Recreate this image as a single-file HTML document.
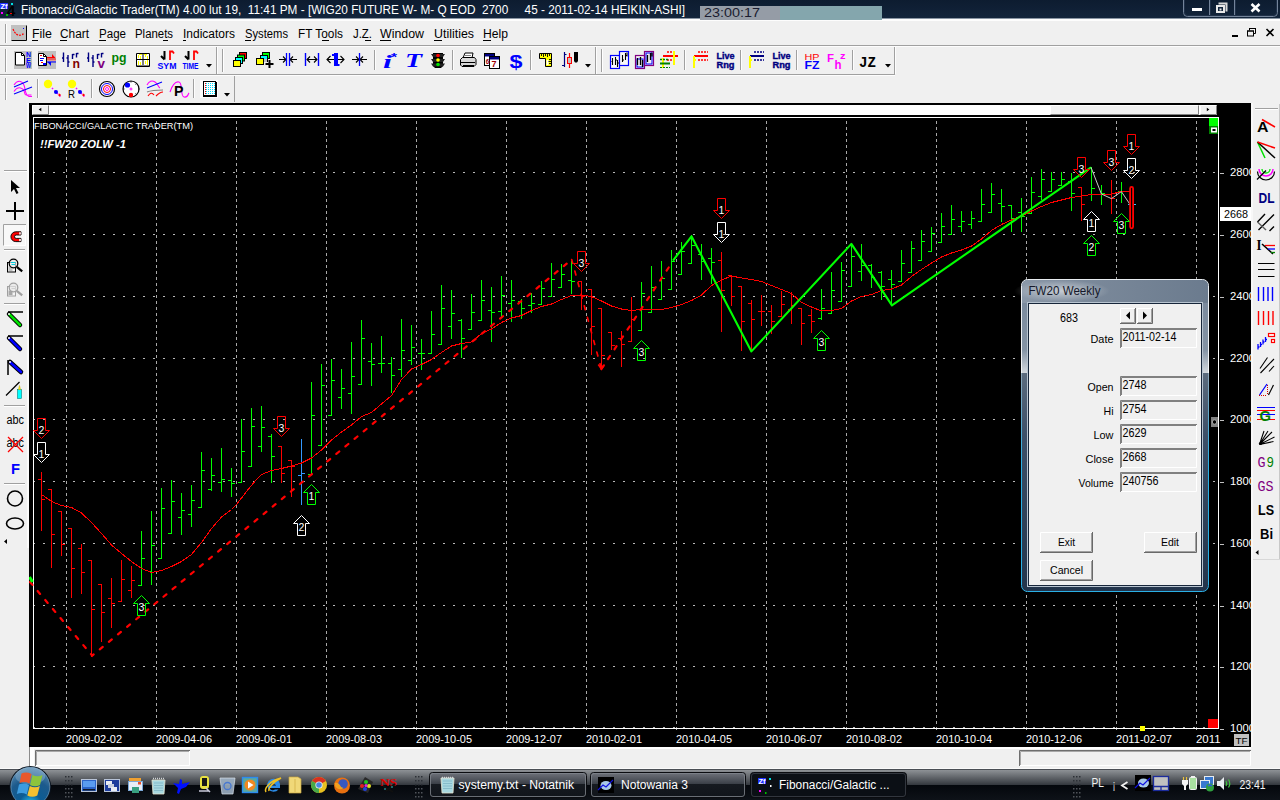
<!DOCTYPE html>
<html lang="pl"><head><meta charset="utf-8"><title>Fibonacci/Galactic Trader(TM) 4.00</title>
<style>html,body{margin:0;padding:0;background:#f0f0f0;overflow:hidden}svg{display:block;font-family:"Liberation Sans", sans-serif}text{white-space:pre}</style></head><body>
<svg width="1280" height="800" viewBox="0 0 1280 800">
<rect x="0" y="0" width="1280" height="800" fill="#f0f0f0" />
<rect x="29" y="103" width="1222" height="644" fill="#000" />
<rect x="32" y="105" width="1185" height="10" fill="#fff" />
<rect x="32" y="105" width="17" height="10" fill="#f0f0f0" />
<path d="M32.5 114.5V105.5H48.5" stroke="#fff" fill="none"/><path d="M32.5 114.5H48.5V105.5" stroke="#808080" fill="none"/>
<path d="M41.3 107.7l-2.6 1.8l2.6 1.800z" fill="#000"/>
<rect x="1050" y="105" width="149" height="10" fill="#f0f0f0" />
<path d="M1050.5 114.5V105.5H1198.5" stroke="#fff" fill="none"/><path d="M1050.5 114.5H1198.5V105.5" stroke="#808080" fill="none"/>
<rect x="1200" y="105" width="17" height="10" fill="#f0f0f0" />
<path d="M1200.5 114.5V105.5H1216.5" stroke="#fff" fill="none"/><path d="M1200.5 114.5H1216.5V105.5" stroke="#808080" fill="none"/>
<path d="M1206.800 107.700l2.600 1.800l-2.600 1.800z" fill="#000"/>
<g shape-rendering="crispEdges">
<line x1="33" y1="172.5" x2="1218" y2="172.5" stroke="#b8b8b8" stroke-width="1" stroke-dasharray="2 8"/>
<line x1="33" y1="234.5" x2="1218" y2="234.5" stroke="#b8b8b8" stroke-width="1" stroke-dasharray="2 8"/>
<line x1="33" y1="296.5" x2="1218" y2="296.5" stroke="#b8b8b8" stroke-width="1" stroke-dasharray="2 8"/>
<line x1="33" y1="358.5" x2="1218" y2="358.5" stroke="#b8b8b8" stroke-width="1" stroke-dasharray="2 8"/>
<line x1="33" y1="419.5" x2="1218" y2="419.5" stroke="#b8b8b8" stroke-width="1" stroke-dasharray="2 8"/>
<line x1="33" y1="481.5" x2="1218" y2="481.5" stroke="#b8b8b8" stroke-width="1" stroke-dasharray="2 8"/>
<line x1="33" y1="543.5" x2="1218" y2="543.5" stroke="#b8b8b8" stroke-width="1" stroke-dasharray="2 8"/>
<line x1="33" y1="605.5" x2="1218" y2="605.5" stroke="#b8b8b8" stroke-width="1" stroke-dasharray="2 8"/>
<line x1="33" y1="666.5" x2="1218" y2="666.5" stroke="#b8b8b8" stroke-width="1" stroke-dasharray="2 8"/>
<line x1="33" y1="727.5" x2="1218" y2="727.5" stroke="#b8b8b8" stroke-width="1" stroke-dasharray="2 8"/>
<line x1="66.5" y1="121" x2="66.5" y2="733" stroke="#a8a8a8" stroke-width="1" stroke-dasharray="3 3"/>
<line x1="156.5" y1="121" x2="156.5" y2="733" stroke="#a8a8a8" stroke-width="1" stroke-dasharray="3 3"/>
<line x1="236.5" y1="121" x2="236.5" y2="733" stroke="#a8a8a8" stroke-width="1" stroke-dasharray="3 3"/>
<line x1="326.5" y1="121" x2="326.5" y2="733" stroke="#a8a8a8" stroke-width="1" stroke-dasharray="3 3"/>
<line x1="416.5" y1="121" x2="416.5" y2="733" stroke="#a8a8a8" stroke-width="1" stroke-dasharray="3 3"/>
<line x1="506.5" y1="121" x2="506.5" y2="733" stroke="#a8a8a8" stroke-width="1" stroke-dasharray="3 3"/>
<line x1="586.5" y1="121" x2="586.5" y2="733" stroke="#a8a8a8" stroke-width="1" stroke-dasharray="3 3"/>
<line x1="676.5" y1="121" x2="676.5" y2="733" stroke="#a8a8a8" stroke-width="1" stroke-dasharray="3 3"/>
<line x1="766.5" y1="121" x2="766.5" y2="733" stroke="#a8a8a8" stroke-width="1" stroke-dasharray="3 3"/>
<line x1="846.5" y1="121" x2="846.5" y2="733" stroke="#a8a8a8" stroke-width="1" stroke-dasharray="3 3"/>
<line x1="936.5" y1="121" x2="936.5" y2="733" stroke="#a8a8a8" stroke-width="1" stroke-dasharray="3 3"/>
<line x1="1026.5" y1="121" x2="1026.5" y2="733" stroke="#a8a8a8" stroke-width="1" stroke-dasharray="3 3"/>
<line x1="1116.5" y1="121" x2="1116.5" y2="733" stroke="#a8a8a8" stroke-width="1" stroke-dasharray="3 3"/>
<line x1="1196.5" y1="121" x2="1196.5" y2="733" stroke="#a8a8a8" stroke-width="1" stroke-dasharray="3 3"/>
<path d="M33.5 728.5V117.5H1218.5V728.5Z" stroke="#fff" fill="none"/>
<line x1="1220" y1="173.5" x2="1224" y2="173.5" stroke="#c0c0c0" stroke-width="1" />
<line x1="1220" y1="235.5" x2="1224" y2="235.5" stroke="#c0c0c0" stroke-width="1" />
<line x1="1220" y1="297.5" x2="1224" y2="297.5" stroke="#c0c0c0" stroke-width="1" />
<line x1="1220" y1="359.5" x2="1224" y2="359.5" stroke="#c0c0c0" stroke-width="1" />
<line x1="1220" y1="420.5" x2="1224" y2="420.5" stroke="#c0c0c0" stroke-width="1" />
<line x1="1220" y1="482.5" x2="1224" y2="482.5" stroke="#c0c0c0" stroke-width="1" />
<line x1="1220" y1="544.5" x2="1224" y2="544.5" stroke="#c0c0c0" stroke-width="1" />
<line x1="1220" y1="606.5" x2="1224" y2="606.5" stroke="#c0c0c0" stroke-width="1" />
<line x1="1220" y1="667.5" x2="1224" y2="667.5" stroke="#c0c0c0" stroke-width="1" />
<line x1="1220" y1="729.5" x2="1224" y2="729.5" stroke="#c0c0c0" stroke-width="1" />
</g>
<rect x="1209" y="118" width="9" height="8" fill="#00ff00" />
<rect x="1209" y="126" width="9" height="8" fill="#008000" />
<rect x="1211" y="127.5" width="6" height="5" fill="#fff" />
<rect x="1212.5" y="129" width="3" height="2" fill="#000" />
<rect x="1208" y="719" width="10" height="9" fill="#ff0000" />
<rect x="1140" y="726" width="5" height="5" fill="#ffff00" />
<rect x="1211" y="417" width="7" height="10" fill="#808080" />
<circle cx="1214.5" cy="422" r="2.2" fill="#000" stroke="#c0c0c0" stroke-width="0.8"/>
<g shape-rendering="crispEdges" stroke-width="1" fill="none">
<path d="M41.5 472V531M38 479.5H42M41 499.5H45M51.5 489V568M48 489.5H52M51 534.5H55M61.5 511V556M58 511.5H62M61 544.5H65M71.5 528V598M68 528.5H72M71 568.5H75M81.5 544V594M78 548.5H82M81 572.5H85M91.5 560V657M88 560.5H92M91 609.5H95M101.5 584V642M98 584.5H102M101 612.5H105M111.5 578V628M108 598.5H112M111 603.5H115M121.5 560V602M118 601.5H122M121 579.5H125M131.5 566V598M128 590.5H132M131 580.5H135M281.5 446V483M278 446.5H282M281 473.5H285M291.5 460V497M288 460.5H292M291 466.5H295M581.5 281V310M578 281.5H582M581 296.5H585M591.5 289V355M588 289.5H592M591 326.5H595M601.5 308V369M598 308.5H602M601 355.5H605M611.5 332V350M608 332.5H612M611 345.5H615M621.5 331V367M618 338.5H622M621 344.5H625M631.5 297V342M628 341.5H632M631 319.5H635M721.5 252V332M718 260.5H722M721 290.5H725M731.5 275V306M728 275.5H732M731 296.5H735M741.5 286V351M738 286.5H742M741 321.5H745M751.5 300V351M748 303.5H752M751 319.5H755M761.5 295V326M758 311.5H762M761 311.5H765M771.5 305V334M768 311.5H772M771 321.5H775M781.5 291V316M778 316.5H782M781 304.5H785M791.5 292V324M788 309.5H792M791 305.5H795M801.5 308V345M798 308.5H802M801 323.5H805M811.5 309V333M808 315.5H812M811 321.5H815M1081.5 187V221M1078 187.5H1082M1081 204.5H1085M1111.5 180V214M1108 194.5H1112M1111 198.5H1115" stroke="#ff0000"/>
<path d="M141.5 531V585M138 585.5H142M141 558.5H145M151.5 511V585M148 571.5H152M151 545.5H155M161.5 488V558M158 558.5H162M161 508.5H165M171.5 480V533M168 533.5H172M171 501.5H175M181.5 493V535M178 517.5H182M181 510.5H185M191.5 485V527M188 514.5H192M191 500.5H195M201.5 452V507M198 507.5H202M201 470.5H205M211.5 458V491M208 489.5H212M211 475.5H215M221.5 448V492M218 482.5H222M221 479.5H225M231.5 468V497M228 480.5H232M231 483.5H235M241.5 419V482M238 482.5H242M241 451.5H245M251.5 408V466M248 466.5H252M251 426.5H255M261.5 406V452M258 446.5H262M261 427.5H265M271.5 434V483M268 436.5H272M271 456.5H275M311.5 382V474M308 474.5H312M311 415.5H315M321.5 364V445M318 445.5H322M321 385.5H325M331.5 359V415M328 415.5H332M331 380.5H335M341.5 369V409M338 397.5H342M341 388.5H345M351.5 342V414M348 393.5H352M351 376.5H355M361.5 320V384M358 384.5H362M361 338.5H365M371.5 343V386M368 361.5H372M371 364.5H375M381.5 336V373M378 363.5H382M381 363.5H385M391.5 357V393M388 363.5H392M391 375.5H395M401.5 319V377M398 369.5H402M401 350.5H405M411.5 325V365M408 360.5H412M411 347.5H415M421.5 339V370M418 353.5H422M421 353.5H425M431.5 311V353M428 353.5H432M431 334.5H435M441.5 285V344M438 344.5H442M441 308.5H445M451.5 290V339M448 326.5H452M451 313.5H455M461.5 319V358M458 320.5H462M461 338.5H465M471.5 294V330M468 329.5H472M471 312.5H475M481.5 280V321M478 320.5H482M481 300.5H485M491.5 287V342M488 310.5H492M491 312.5H495M501.5 276V317M498 311.5H502M501 295.5H505M511.5 280V322M508 303.5H512M511 300.5H515M521.5 299V319M518 301.5H522M521 308.5H525M531.5 293V313M528 305.5H532M531 303.5H535M541.5 281V305M538 304.5H542M541 288.5H545M551.5 263V296M548 296.5H552M551 279.5H555M561.5 264V287M558 287.5H562M561 274.5H565M571.5 261V294M568 280.5H572M571 281.5H575M641.5 282V330M638 330.5H642M641 293.5H645M651.5 266V312M648 312.5H652M651 287.5H655M661.5 261V299M658 299.5H662M661 278.5H665M671.5 250V289M668 289.5H672M671 261.5H675M681.5 242V274M678 274.5H682M681 251.5H685M691.5 235V263M688 263.5H692M691 245.5H695M701.5 244V280M698 254.5H702M701 261.5H705M711.5 248V284M708 258.5H712M711 262.5H715M821.5 289V320M818 318.5H822M821 308.5H825M831.5 272V314M828 313.5H832M831 290.5H835M841.5 262V301M838 301.5H842M841 270.5H845M851.5 243V287M848 286.5H852M851 256.5H855M861.5 244V281M858 271.5H862M861 265.5H865M871.5 264V288M868 265.5H872M871 277.5H875M881.5 271V300M878 272.5H882M881 286.5H885M891.5 270V304M888 279.5H892M891 284.5H895M901.5 250V281M898 281.5H902M901 263.5H905M911.5 241V272M908 272.5H912M911 248.5H915M921.5 230V260M918 260.5H922M921 241.5H925M931.5 227V251M928 251.5H932M931 233.5H935M941.5 213V243M938 242.5H942M941 226.5H945M951.5 205V234M948 234.5H952M951 219.5H955M961.5 211V232M958 226.5H962M961 221.5H965M971.5 211V229M968 224.5H972M971 218.5H975M981.5 189V222M978 221.5H982M981 204.5H985M991.5 183V213M988 212.5H992M991 194.5H995M1001.5 189V222M998 203.5H1002M1001 206.5H1005M1011.5 205V232M1008 205.5H1012M1011 218.5H1015M1021.5 198V232M1018 212.5H1022M1021 216.5H1025M1031.5 177V213M1028 213.5H1032M1031 192.5H1035M1041.5 169V200M1038 196.5H1042M1041 179.5H1045M1051.5 172V192M1048 191.5H1052M1051 179.5H1055M1061.5 172V186M1058 185.5H1062M1061 179.5H1065M1071.5 173V211M1068 181.5H1072M1071 193.5H1075M1091.5 167V201M1088 194.5H1092M1091 188.5H1095M1101.5 185V205M1098 194.5H1102M1101 193.5H1105M1121.5 182V203M1118 191.5H1122M1121 191.5H1125" stroke="#00ff00"/>
<path d="M301.5 439V505M298 475.5H302M301 473.5H305" stroke="#3399ff"/>
</g>
<polyline points="42.5,495 51.5,501.5 61.5,505.5 71.5,507.5 81.5,513 91.5,522.5 101.5,533.5 111.5,545 121.5,553.5 131.5,561.5 141.5,568.5 151.5,572.5 161.5,570.5 171.5,566.5 181.5,561.5 191.5,554.5 201.5,542.5 211.5,528.5 221.5,517 231.5,509.5 236.5,504.5 246.5,491.5 256,480 261.5,474.5 271.5,470.5 281.5,468.5 291.5,466 301.5,463 311.5,458 321.5,450 331.5,440 341.5,432 351.5,425 361.5,416.5 371.5,412.5 381.5,404 391.5,395.5 401.5,379.5 411.5,369 421.5,364.5 431.5,359.5 441.5,352.5 451.5,346 461.5,343.5 471.5,342 481.5,333.5 491.5,329 501.5,322.5 511.5,318 521.5,315.5 531.5,310.5 541.5,306.5 551.5,304 561.5,299.5 571.5,295.5 581.5,295 591.5,296.5 601.5,301 611.5,306 621.5,309 631.5,310.5 641.5,309.5 651.5,309.5 661.5,309.5 671.5,307.5 681.5,304.5 691.5,300.5 701.5,295 711.5,285.5 721.5,280 731.5,276 741.5,278 751.5,279.5 761.5,281.5 771.5,285.5 781.5,289.5 791.5,293.5 801.5,302.5 811.5,307 821.5,311 831.5,310.5 841.5,308.5 851.5,301 861.5,296.5 871.5,294.5 881.5,290.5 891.5,289 901.5,285 911.5,276.5 921.5,269.5 931.5,263 941.5,257 951.5,253 961.5,250 971.5,246 981.5,239 991.5,230.5 1001.5,224.5 1011.5,220 1021.5,216 1031.5,211 1041.5,206.5 1051.5,202.5 1061.5,200 1071.5,197.5 1081.5,196 1091.5,194.5 1101.5,194.5 1111.5,194 1121.5,191.5 1130,191.5" fill="none" stroke="#ff0000" stroke-width="1" shape-rendering="crispEdges"/>
<path d="M30 582L92.2 655.6L571.7 259.5" fill="none" stroke="#ff0000" stroke-width="2.2" stroke-dasharray="3.8 8" stroke-linecap="round"/>
<path d="M571.7 259.5L601.4 369" fill="none" stroke="#ff0000" stroke-width="1.7" stroke-dasharray="4 8" stroke-linecap="round"/>
<path d="M601.4 369L673 261" fill="none" stroke="#ff0000" stroke-width="2.2" stroke-dasharray="3.8 8" stroke-linecap="round"/>
<path d="M598.3 364.5L601.4 369L604.5 364.5" fill="none" stroke="#ff0000" stroke-width="1.6"/>
<path d="M673 260.6L691.5 236.3L751.4 351.4L851.4 243.9L891.9 305.3L1091 167.3" fill="none" stroke="#00ff00" stroke-width="2.1" stroke-linejoin="round"/>
<path d="M29.5 577L32.5 582" stroke="#00ff00" stroke-width="3"/>
<polyline points="1091,167.3 1101.4,194 1111.4,198.6 1121.4,191.6 1130,204.4" fill="none" stroke="#c8c8c8" stroke-width="1"/>
<line x1="1128" y1="204.5" x2="1136" y2="204.5" stroke="#40c0ff" stroke-width="1" />
<rect x="1130.1" y="186.9" width="3" height="41.4" rx="1.5" fill="#000" stroke="#ff0000" stroke-width="1.8"/>
<polygon points="37.5,418.5 45.5,418.5 45.5,430.5 49.5,430.5 41.5,438.5 33.5,430.5 37.5,430.5" fill="none" stroke="#ff0000" stroke-width="1"/>
<text x="41.5" y="433.7" font-size="10.5" fill="#fff" text-anchor="middle" xml:space="preserve">2</text>
<polygon points="37.5,442.5 45.5,442.5 45.5,454.5 49.5,454.5 41.5,462.5 33.5,454.5 37.5,454.5" fill="none" stroke="#fff" stroke-width="1"/>
<text x="41.5" y="457.7" font-size="10.5" fill="#fff" text-anchor="middle" xml:space="preserve">1</text>
<polygon points="141.5,595.5 149.5,603.5 145.5,603.5 145.5,615.5 137.5,615.5 137.5,603.5 133.5,603.5" fill="none" stroke="#00ff00" stroke-width="1"/>
<text x="141.5" y="610.7" font-size="10.5" fill="#fff" text-anchor="middle" xml:space="preserve">3</text>
<polygon points="277.5,416.5 285.5,416.5 285.5,428.5 289.5,428.5 281.5,436.5 273.5,428.5 277.5,428.5" fill="none" stroke="#ff0000" stroke-width="1"/>
<text x="281.5" y="431.7" font-size="10.5" fill="#fff" text-anchor="middle" xml:space="preserve">3</text>
<polygon points="311.5,484.5 319.5,492.5 315.5,492.5 315.5,504.5 307.5,504.5 307.5,492.5 303.5,492.5" fill="none" stroke="#00ff00" stroke-width="1"/>
<text x="311.5" y="499.7" font-size="10.5" fill="#fff" text-anchor="middle" xml:space="preserve">1</text>
<polygon points="301.5,515.5 309.5,523.5 305.5,523.5 305.5,535.5 297.5,535.5 297.5,523.5 293.5,523.5" fill="none" stroke="#fff" stroke-width="1"/>
<text x="301.5" y="530.7" font-size="10.5" fill="#fff" text-anchor="middle" xml:space="preserve">2</text>
<polygon points="577.5,251.5 585.5,251.5 585.5,263.5 589.5,263.5 581.5,271.5 573.5,263.5 577.5,263.5" fill="none" stroke="#ff0000" stroke-width="1"/>
<text x="581.5" y="266.7" font-size="10.5" fill="#fff" text-anchor="middle" xml:space="preserve">3</text>
<polygon points="641.5,340.5 649.5,348.5 645.5,348.5 645.5,360.5 637.5,360.5 637.5,348.5 633.5,348.5" fill="none" stroke="#00ff00" stroke-width="1"/>
<text x="641.5" y="355.7" font-size="10.5" fill="#fff" text-anchor="middle" xml:space="preserve">3</text>
<polygon points="717.5,198.5 725.5,198.5 725.5,210.5 729.5,210.5 721.5,218.5 713.5,210.5 717.5,210.5" fill="none" stroke="#ff0000" stroke-width="1"/>
<text x="721.5" y="213.7" font-size="10.5" fill="#fff" text-anchor="middle" xml:space="preserve">1</text>
<polygon points="717.5,222.5 725.5,222.5 725.5,234.5 729.5,234.5 721.5,242.5 713.5,234.5 717.5,234.5" fill="none" stroke="#fff" stroke-width="1"/>
<text x="721.5" y="237.7" font-size="10.5" fill="#fff" text-anchor="middle" xml:space="preserve">1</text>
<polygon points="821.5,330.5 829.5,338.5 825.5,338.5 825.5,350.5 817.5,350.5 817.5,338.5 813.5,338.5" fill="none" stroke="#00ff00" stroke-width="1"/>
<text x="821.5" y="345.7" font-size="10.5" fill="#fff" text-anchor="middle" xml:space="preserve">3</text>
<polygon points="1077.5,157.5 1085.5,157.5 1085.5,169.5 1089.5,169.5 1081.5,177.5 1073.5,169.5 1077.5,169.5" fill="none" stroke="#ff0000" stroke-width="1"/>
<text x="1081.5" y="172.7" font-size="10.5" fill="#fff" text-anchor="middle" xml:space="preserve">3</text>
<polygon points="1107.5,150.5 1115.5,150.5 1115.5,162.5 1119.5,162.5 1111.5,170.5 1103.5,162.5 1107.5,162.5" fill="none" stroke="#ff0000" stroke-width="1"/>
<text x="1111.5" y="165.7" font-size="10.5" fill="#fff" text-anchor="middle" xml:space="preserve">3</text>
<polygon points="1127.5,134.5 1135.5,134.5 1135.5,146.5 1139.5,146.5 1131.5,154.5 1123.5,146.5 1127.5,146.5" fill="none" stroke="#ff0000" stroke-width="1"/>
<text x="1131.5" y="149.7" font-size="10.5" fill="#fff" text-anchor="middle" xml:space="preserve">1</text>
<polygon points="1127.5,158.5 1135.5,158.5 1135.5,170.5 1139.5,170.5 1131.5,178.5 1123.5,170.5 1127.5,170.5" fill="none" stroke="#fff" stroke-width="1"/>
<text x="1131.5" y="173.7" font-size="10.5" fill="#fff" text-anchor="middle" xml:space="preserve">2</text>
<polygon points="1091.5,211.5 1099.5,219.5 1095.5,219.5 1095.5,231.5 1087.5,231.5 1087.5,219.5 1083.5,219.5" fill="none" stroke="#fff" stroke-width="1"/>
<text x="1091.5" y="226.7" font-size="10.5" fill="#fff" text-anchor="middle" xml:space="preserve">1</text>
<polygon points="1091.5,235.5 1099.5,243.5 1095.5,243.5 1095.5,255.5 1087.5,255.5 1087.5,243.5 1083.5,243.5" fill="none" stroke="#00ff00" stroke-width="1"/>
<text x="1091.5" y="250.7" font-size="10.5" fill="#fff" text-anchor="middle" xml:space="preserve">2</text>
<polygon points="1121.5,213.5 1129.5,221.5 1125.5,221.5 1125.5,233.5 1117.5,233.5 1117.5,221.5 1113.5,221.5" fill="none" stroke="#00ff00" stroke-width="1"/>
<text x="1121.5" y="228.7" font-size="10.5" fill="#fff" text-anchor="middle" xml:space="preserve">3</text>
<text x="34" y="129" font-size="9.5" fill="#fff" textLength="159" lengthAdjust="spacingAndGlyphs" xml:space="preserve">FIBONACCI/GALACTIC TRADER(TM)</text>
<text x="40" y="148" font-size="11.5" fill="#fff" textLength="86" lengthAdjust="spacingAndGlyphs" font-weight="bold" font-style="italic" xml:space="preserve">!!FW20 ZOLW -1</text>
<clipPath id="yc"><rect x="1219" y="110" width="32" height="640"/></clipPath><g clip-path="url(#yc)">
<text x="1230" y="176" font-size="11" fill="#fff" textLength="25" lengthAdjust="spacingAndGlyphs" xml:space="preserve">2800</text>
<text x="1230" y="238" font-size="11" fill="#fff" textLength="25" lengthAdjust="spacingAndGlyphs" xml:space="preserve">2600</text>
<text x="1230" y="300" font-size="11" fill="#fff" textLength="25" lengthAdjust="spacingAndGlyphs" xml:space="preserve">2400</text>
<text x="1230" y="362" font-size="11" fill="#fff" textLength="25" lengthAdjust="spacingAndGlyphs" xml:space="preserve">2200</text>
<text x="1230" y="423" font-size="11" fill="#fff" textLength="25" lengthAdjust="spacingAndGlyphs" xml:space="preserve">2000</text>
<text x="1230" y="485" font-size="11" fill="#fff" textLength="25" lengthAdjust="spacingAndGlyphs" xml:space="preserve">1800</text>
<text x="1230" y="547" font-size="11" fill="#fff" textLength="25" lengthAdjust="spacingAndGlyphs" xml:space="preserve">1600</text>
<text x="1230" y="609" font-size="11" fill="#fff" textLength="25" lengthAdjust="spacingAndGlyphs" xml:space="preserve">1400</text>
<text x="1230" y="670" font-size="11" fill="#fff" textLength="25" lengthAdjust="spacingAndGlyphs" xml:space="preserve">1200</text>
<text x="1230" y="732" font-size="11" fill="#fff" textLength="25" lengthAdjust="spacingAndGlyphs" xml:space="preserve">1000</text>
</g>
<rect x="1220" y="207" width="31" height="14" fill="#fff" />
<text x="1224" y="218" font-size="11" fill="#000" textLength="24" lengthAdjust="spacingAndGlyphs" xml:space="preserve">2668</text>
<text x="66" y="743" font-size="11" fill="#fff" textLength="56" lengthAdjust="spacingAndGlyphs" xml:space="preserve">2009-02-02</text>
<text x="156" y="743" font-size="11" fill="#fff" textLength="56" lengthAdjust="spacingAndGlyphs" xml:space="preserve">2009-04-06</text>
<text x="236" y="743" font-size="11" fill="#fff" textLength="56" lengthAdjust="spacingAndGlyphs" xml:space="preserve">2009-06-01</text>
<text x="326" y="743" font-size="11" fill="#fff" textLength="56" lengthAdjust="spacingAndGlyphs" xml:space="preserve">2009-08-03</text>
<text x="416" y="743" font-size="11" fill="#fff" textLength="56" lengthAdjust="spacingAndGlyphs" xml:space="preserve">2009-10-05</text>
<text x="506" y="743" font-size="11" fill="#fff" textLength="56" lengthAdjust="spacingAndGlyphs" xml:space="preserve">2009-12-07</text>
<text x="586" y="743" font-size="11" fill="#fff" textLength="56" lengthAdjust="spacingAndGlyphs" xml:space="preserve">2010-02-01</text>
<text x="676" y="743" font-size="11" fill="#fff" textLength="56" lengthAdjust="spacingAndGlyphs" xml:space="preserve">2010-04-05</text>
<text x="766" y="743" font-size="11" fill="#fff" textLength="56" lengthAdjust="spacingAndGlyphs" xml:space="preserve">2010-06-07</text>
<text x="846" y="743" font-size="11" fill="#fff" textLength="56" lengthAdjust="spacingAndGlyphs" xml:space="preserve">2010-08-02</text>
<text x="936" y="743" font-size="11" fill="#fff" textLength="56" lengthAdjust="spacingAndGlyphs" xml:space="preserve">2010-10-04</text>
<text x="1026" y="743" font-size="11" fill="#fff" textLength="56" lengthAdjust="spacingAndGlyphs" xml:space="preserve">2010-12-06</text>
<text x="1116" y="743" font-size="11" fill="#fff" textLength="56" lengthAdjust="spacingAndGlyphs" xml:space="preserve">2011-02-07</text>
<text x="1196" y="743" font-size="11" fill="#fff" textLength="24.5" lengthAdjust="spacingAndGlyphs" xml:space="preserve">2011</text>
<rect x="1234" y="734" width="15" height="12" fill="#c0c0c0" />
<text x="1235.5" y="744" font-size="9.5" fill="#000" textLength="12" lengthAdjust="spacingAndGlyphs" xml:space="preserve">TF</text>
<defs><linearGradient id="tbg" x1="0" y1="0" x2="0" y2="1"><stop offset="0" stop-color="#0d1c30"/><stop offset="1" stop-color="#12243b"/></linearGradient></defs>
<rect x="0" y="0" width="1280" height="18" fill="url(#tbg)" />
<rect x="0" y="18" width="1280" height="1" fill="#8a96a4" />
<rect x="0" y="19" width="1280" height="2" fill="#fdfdfd" />
<rect x="0" y="3" width="8" height="6" fill="#2030ff" />
<text x="0.5" y="8.5" font-size="7" fill="#fff" textLength="7" lengthAdjust="spacingAndGlyphs" font-weight="bold" xml:space="preserve">Zf</text>
<text x="7" y="16" font-size="15" fill="#000" font-weight="bold" xml:space="preserve">4</text>
<rect x="11" y="3" width="2" height="2" fill="#00e0e0" />
<rect x="1" y="12" width="2" height="2" fill="#ff00ff" />
<rect x="6" y="14" width="2" height="2" fill="#00c000" />
<rect x="10" y="13" width="2" height="1" fill="#ff0000" />
<text x="21" y="14" font-size="12.5" fill="#fff" textLength="664" lengthAdjust="spacingAndGlyphs" xml:space="preserve">Fibonacci/Galactic Trader(TM) 4.00 lut 19,  11:41 PM - [WIG20 FUTURE W- M- Q EOD  2700     45 - 2011-02-14 HEIKIN-ASHI]</text>
<rect x="700" y="6" width="80" height="14" fill="#959ca6" />
<rect x="780" y="6" width="102" height="14" fill="#84a6ad" />
<text x="704" y="17" font-size="13" fill="#1a1c30" textLength="56" lengthAdjust="spacingAndGlyphs" xml:space="preserve">23:00:17</text>
<path d="M1183.5 0V12.5Q1183.5 16.5 1187.5 16.5H1273.5Q1277.5 16.5 1277.5 12.5V0" fill="none" stroke="#74849a"/>
<path d="M1184.5 0V12Q1184.5 15.5 1188 15.5H1273Q1276.500 15.5 1276.500 12V0" fill="none" stroke="#1f3048"/>
<line x1="1209.5" y1="0" x2="1209.5" y2="15" stroke="#74849a" stroke-width="1" />
<line x1="1210.5" y1="0" x2="1210.5" y2="15" stroke="#1f3048" stroke-width="1" />
<line x1="1234.5" y1="0" x2="1234.5" y2="15" stroke="#74849a" stroke-width="1" />
<line x1="1235.5" y1="0" x2="1235.5" y2="15" stroke="#1f3048" stroke-width="1" />
<rect x="1192" y="8" width="10" height="3" fill="#fff" />
<path d="M1218.500 3.500h8v8" fill="none" stroke="#d8d8d8" stroke-width="2"/>
<rect x="1216" y="5" width="9" height="8" fill="#e8e8e8" />
<rect x="1218" y="7" width="5" height="4" fill="#12243b" />
<rect x="1219.5" y="8.5" width="2" height="2" fill="#e8e8e8" />
<path d="M1251.500 4l8 7.500M1259.500 4l-8 7.500" stroke="#fff" stroke-width="2.6" fill="none"/>
<rect x="0" y="21" width="1280" height="24" fill="#f0f0f0" />
<rect x="0" y="45" width="1280" height="1" fill="#a0a0a0" />
<rect x="0" y="46" width="1280" height="1" fill="#fdfdfd" />
<line x1="5.5" y1="24" x2="5.5" y2="43" stroke="#a0a0a0" stroke-width="1" />
<line x1="6.5" y1="24" x2="6.5" y2="43" stroke="#fff" stroke-width="1" />
<rect x="11" y="25" width="15" height="15" fill="#c0c0c0" />
<path d="M11.500 40.500H26.500V25.500" fill="none" stroke="#000"/>
<path d="M13 29c2 5 5 7 8 6s2-1 3-2" fill="none" stroke="#ff0000" stroke-width="1.2" stroke-dasharray="2 1"/>
<rect x="23" y="28" width="1" height="1" fill="#0000ff" />
<text x="32" y="38" font-size="12.5" fill="#000" textLength="20" lengthAdjust="spacingAndGlyphs" xml:space="preserve">File</text>
<text x="60" y="38" font-size="12.5" fill="#000" textLength="29" lengthAdjust="spacingAndGlyphs" xml:space="preserve">Chart</text>
<text x="99" y="38" font-size="12.5" fill="#000" textLength="27" lengthAdjust="spacingAndGlyphs" xml:space="preserve">Page</text>
<text x="135" y="38" font-size="12.5" fill="#000" textLength="38" lengthAdjust="spacingAndGlyphs" xml:space="preserve">Planets</text>
<text x="183" y="38" font-size="12.5" fill="#000" textLength="52" lengthAdjust="spacingAndGlyphs" xml:space="preserve">Indicators</text>
<text x="245" y="38" font-size="12.5" fill="#000" textLength="43" lengthAdjust="spacingAndGlyphs" xml:space="preserve">Systems</text>
<text x="298" y="38" font-size="12.5" fill="#000" textLength="45" lengthAdjust="spacingAndGlyphs" xml:space="preserve">FT Tools</text>
<text x="353" y="38" font-size="12.5" fill="#000" textLength="19" lengthAdjust="spacingAndGlyphs" xml:space="preserve">J.Z.</text>
<text x="380" y="38" font-size="12.5" fill="#000" textLength="44" lengthAdjust="spacingAndGlyphs" xml:space="preserve">Window</text>
<text x="434" y="38" font-size="12.5" fill="#000" textLength="40" lengthAdjust="spacingAndGlyphs" xml:space="preserve">Utilities</text>
<text x="483" y="38" font-size="12.5" fill="#000" textLength="25" lengthAdjust="spacingAndGlyphs" xml:space="preserve">Help</text>
<line x1="32" y1="40.5" x2="38" y2="40.5" stroke="#000" stroke-width="1" />
<line x1="60" y1="40.5" x2="67" y2="40.5" stroke="#000" stroke-width="1" />
<line x1="99" y1="40.5" x2="106" y2="40.5" stroke="#000" stroke-width="1" />
<line x1="163" y1="40.5" x2="168" y2="40.5" stroke="#000" stroke-width="1" />
<line x1="183" y1="40.5" x2="186" y2="40.5" stroke="#000" stroke-width="1" />
<line x1="245" y1="40.5" x2="251" y2="40.5" stroke="#000" stroke-width="1" />
<line x1="322" y1="40.5" x2="329" y2="40.5" stroke="#000" stroke-width="1" />
<line x1="365" y1="40.5" x2="371" y2="40.5" stroke="#000" stroke-width="1" />
<line x1="380" y1="40.5" x2="391" y2="40.5" stroke="#000" stroke-width="1" />
<line x1="434" y1="40.5" x2="442" y2="40.5" stroke="#000" stroke-width="1" />
<line x1="483" y1="40.5" x2="491" y2="40.5" stroke="#000" stroke-width="1" />
<rect x="1232" y="35" width="6" height="2" fill="#000" />
<path d="M1249.500 30.500v-2h6v5h-2" fill="none" stroke="#000"/><rect x="1247.500" y="31" width="6" height="5" fill="#f0f0f0" stroke="#000"/><path d="M1247 31h7M1249 28.500h7" stroke="#000"/>
<path d="M1266.500 29l7 7M1273.500 29l-7 7" stroke="#000" stroke-width="1.6"/>
<rect x="0" y="47" width="1280" height="56" fill="#f0f0f0" />
<rect x="0" y="74" width="895" height="1" fill="#a0a0a0" />
<rect x="0" y="75" width="895" height="1" fill="#fdfdfd" />
<rect x="0" y="102" width="234" height="1" fill="#f0f0f0" />
<line x1="216.5" y1="47" x2="216.5" y2="74" stroke="#a0a0a0" stroke-width="1" />
<line x1="217.5" y1="47" x2="217.5" y2="74" stroke="#fdfdfd" stroke-width="1" />
<line x1="595.5" y1="47" x2="595.5" y2="74" stroke="#a0a0a0" stroke-width="1" />
<line x1="596.5" y1="47" x2="596.5" y2="74" stroke="#fdfdfd" stroke-width="1" />
<line x1="894.5" y1="47" x2="894.5" y2="74" stroke="#a0a0a0" stroke-width="1" />
<line x1="895.5" y1="47" x2="895.5" y2="74" stroke="#fdfdfd" stroke-width="1" />
<line x1="234.5" y1="76" x2="234.5" y2="102" stroke="#a0a0a0" stroke-width="1" />
<line x1="5.5" y1="49" x2="5.5" y2="72" stroke="#a0a0a0" stroke-width="1" />
<line x1="6.5" y1="49" x2="6.5" y2="72" stroke="#fff" stroke-width="1" />
<line x1="222.5" y1="49" x2="222.5" y2="72" stroke="#a0a0a0" stroke-width="1" />
<line x1="223.5" y1="49" x2="223.5" y2="72" stroke="#fff" stroke-width="1" />
<line x1="601.5" y1="49" x2="601.5" y2="72" stroke="#a0a0a0" stroke-width="1" />
<line x1="602.5" y1="49" x2="602.5" y2="72" stroke="#fff" stroke-width="1" />
<line x1="5.5" y1="78" x2="5.5" y2="100" stroke="#a0a0a0" stroke-width="1" />
<line x1="6.5" y1="78" x2="6.5" y2="100" stroke="#fff" stroke-width="1" />
<line x1="374.5" y1="50" x2="374.5" y2="70" stroke="#a0a0a0" stroke-width="1" />
<line x1="375.5" y1="50" x2="375.5" y2="70" stroke="#fdfdfd" stroke-width="1" />
<line x1="452.5" y1="50" x2="452.5" y2="70" stroke="#a0a0a0" stroke-width="1" />
<line x1="453.5" y1="50" x2="453.5" y2="70" stroke="#fdfdfd" stroke-width="1" />
<line x1="530.5" y1="50" x2="530.5" y2="70" stroke="#a0a0a0" stroke-width="1" />
<line x1="531.5" y1="50" x2="531.5" y2="70" stroke="#fdfdfd" stroke-width="1" />
<line x1="684.5" y1="50" x2="684.5" y2="70" stroke="#a0a0a0" stroke-width="1" />
<line x1="685.5" y1="50" x2="685.5" y2="70" stroke="#fdfdfd" stroke-width="1" />
<line x1="740.5" y1="50" x2="740.5" y2="70" stroke="#a0a0a0" stroke-width="1" />
<line x1="741.5" y1="50" x2="741.5" y2="70" stroke="#fdfdfd" stroke-width="1" />
<line x1="796.5" y1="50" x2="796.5" y2="70" stroke="#a0a0a0" stroke-width="1" />
<line x1="797.5" y1="50" x2="797.5" y2="70" stroke="#fdfdfd" stroke-width="1" />
<line x1="852.5" y1="50" x2="852.5" y2="70" stroke="#a0a0a0" stroke-width="1" />
<line x1="853.5" y1="50" x2="853.5" y2="70" stroke="#fdfdfd" stroke-width="1" />
<line x1="37.5" y1="79" x2="37.5" y2="98" stroke="#a0a0a0" stroke-width="1" />
<line x1="38.5" y1="79" x2="38.5" y2="98" stroke="#fdfdfd" stroke-width="1" />
<line x1="91.5" y1="79" x2="91.5" y2="98" stroke="#a0a0a0" stroke-width="1" />
<line x1="92.5" y1="79" x2="92.5" y2="98" stroke="#fdfdfd" stroke-width="1" />
<line x1="193.5" y1="79" x2="193.5" y2="98" stroke="#a0a0a0" stroke-width="1" />
<line x1="194.5" y1="79" x2="194.5" y2="98" stroke="#fdfdfd" stroke-width="1" />
<path d="M206 64h6l-3 3.500z" fill="#000"/>
<path d="M585 64h6l-3 3.500z" fill="#000"/>
<path d="M885 64h6l-3 3.500z" fill="#000"/>
<path d="M224 93h6l-3 3.500z" fill="#000"/>
<rect x="14" y="51" width="18" height="18" fill="#c0c0c0" />
<path d="M15.500 52.500h6l3 3v9.500h-9z" fill="#fff" stroke="#000" stroke-width="1"/><path d="M21.500 52.500v3h3" fill="none" stroke="#000"/>
<text x="26" y="57.2" font-size="6.5" fill="#0000ff" textLength="5" lengthAdjust="spacingAndGlyphs" font-weight="bold" xml:space="preserve">N</text>
<text x="26" y="62.8" font-size="6.5" fill="#0000ff" textLength="5" lengthAdjust="spacingAndGlyphs" font-weight="bold" xml:space="preserve">E</text>
<text x="26" y="68.4" font-size="6.5" fill="#0000ff" textLength="5" lengthAdjust="spacingAndGlyphs" font-weight="bold" xml:space="preserve">W</text>
<rect x="38" y="51" width="18" height="18" fill="#c0c0c0" />
<path d="M38.500 53.500h5l3 3v9h-8z" fill="#fff" stroke="#000"/><path d="M43.500 53.500v3h3" fill="none" stroke="#000"/>
<rect x="40" y="55" width="2" height="1" fill="#ff0000" />
<rect x="40" y="58" width="4" height="1" fill="#0000ff" />
<rect x="40" y="60" width="3" height="1" fill="#0000ff" />
<rect x="41" y="62" width="2" height="1" fill="#ff0000" />
<rect x="43" y="63" width="3" height="2" fill="#0000ff" />
<path d="M47 57h5v-3l4 4.500h-9z" fill="#ff0000"/><path d="M56 62h-5v4l-4-4.500h9z" fill="#0000ff"/>
<rect x="47" y="59.5" width="9" height="1" fill="#ff0000" />
<rect x="47" y="60.5" width="9" height="1" fill="#e0d8c0" />
<rect x="47" y="61.5" width="9" height="1" fill="#0000ff" />
<g stroke="#000080" stroke-width="1.4" fill="none"><path d="M63.5 52.500v9.500M62 58h1.500M68 55v12M66.5 58h1.500M68 62h1.500M72.5 54v5M72.5 54.500h2M76.5 53v4.500M76.5 53.500h2"/></g>
<text x="72.5" y="68" font-size="12.5" fill="#800000" textLength="7.5" lengthAdjust="spacingAndGlyphs" font-weight="bold" xml:space="preserve">n</text>
<g stroke="#000080" stroke-width="1.4" fill="none"><path d="M88.5 52.500v9.500M87 58h1.500M93 55v12M91.5 58h1.500M93 62h1.500M97.5 54v5M97.5 54.500h2M101.5 53v4.500M101.5 53.500h2"/></g>
<text x="97.5" y="68" font-size="12.5" fill="#800080" textLength="7.5" lengthAdjust="spacingAndGlyphs" font-weight="bold" xml:space="preserve">v</text>
<text x="111.5" y="62" font-size="13.5" fill="#008000" textLength="15" lengthAdjust="spacingAndGlyphs" font-weight="bold" xml:space="preserve">pg</text>
<rect x="136" y="53" width="14" height="14" fill="#fff" />
<g fill="#ffff00"><rect x="138" y="55" width="1" height="3"/><rect x="140" y="56" width="1" height="3"/><rect x="145" y="55" width="1" height="2"/><rect x="147" y="56" width="1" height="3"/><rect x="138" y="61" width="1" height="4"/><rect x="140" y="62" width="1" height="3"/><rect x="145" y="61" width="1" height="3"/><rect x="147" y="60" width="1" height="5"/><rect x="139" y="54" width="3" height="1"/><rect x="144" y="54" width="3" height="1"/></g>
<path d="M136.500 53.500h13v13h-13zM143 53v13.500M136 59.500h14" fill="none" stroke="#000"/><path d="M137 65.500h12" stroke="#808080"/>
<path d="M164.5 51v8.500M161 56l3.500 3.500" fill="none" stroke="#000" stroke-width="2"/>
<path d="M170 60v-8.500h2.500l1.500 2" fill="none" stroke="#ff0000" stroke-width="1.8"/>
<text x="157.5" y="69" font-size="8.5" fill="#0000ff" textLength="19" lengthAdjust="spacingAndGlyphs" font-weight="bold" xml:space="preserve">SYM</text>
<path d="M188.5 51v8.500M185 56l3.500 3.500" fill="none" stroke="#000" stroke-width="2"/>
<path d="M194 60v-8.500h2.500l1.500 2" fill="none" stroke="#ff0000" stroke-width="1.8"/>
<text x="182.5" y="69" font-size="8.5" fill="#0000ff" textLength="16" lengthAdjust="spacingAndGlyphs" font-weight="bold" xml:space="preserve">TIME</text>
<rect x="239.5" y="52.5" width="7" height="6" fill="#ff0000" stroke="#000"/>
<rect x="237.5" y="55.0" width="7" height="6" fill="#00ff00" stroke="#000"/>
<rect x="235.5" y="57.5" width="7" height="6" fill="#00ffff" stroke="#000"/>
<rect x="233.5" y="60.5" width="7" height="6" fill="#ffff00" stroke="#000"/>
<rect x="262.5" y="52.5" width="7" height="6" fill="#00ff00" stroke="#000"/>
<rect x="260.5" y="55.5" width="7" height="6" fill="#00ffff" stroke="#000"/>
<rect x="256.5" y="58.5" width="7" height="6" fill="#ffff00" stroke="#000"/>
<rect x="264" y="59" width="3" height="3" fill="#c0c0c0" />
<path d="M269.500 60v8M265.500 64h8" stroke="#000" stroke-width="2"/>
<g fill="none" stroke="#000" stroke-width="1.1"><path d="M279 59.500h7M283 56.500l3 3l-3 3M290 59.500h7M293 56.500l-3 3l3 3"/></g>
<path d="M286.500 53v13M289.500 53v13" stroke="#0000ff" stroke-width="1.3"/>
<g fill="none" stroke="#000" stroke-width="1.1"><path d="M307 59.500h10M310 56.500l-3 3l3 3M314 56.500l3 3l-3 3"/></g>
<path d="M305.500 53v13M318.500 53v13" stroke="#0000ff" stroke-width="1.4"/>
<g fill="none" stroke="#000" stroke-width="1.1"><path d="M327 59.500h17M330.500 56l-3.500 3.500l3.500 3.500M340.500 56l3.500 3.500l-3.500 3.500"/></g>
<rect x="334" y="53" width="4" height="13" fill="#0000ff" />
<rect x="332" y="54" width="2" height="2" fill="#0000ff" />
<rect x="338" y="64" width="1.5" height="2" fill="#0000ff" />
<g fill="none" stroke="#000" stroke-width="1.1"><path d="M352 59.500h15M356 56.500l3 3l-3 3M363 56.500l-3 3l3 3"/></g>
<path d="M359.500 53v13" stroke="#0000ff" stroke-width="1.3"/>
<text x="383" y="68" font-size="19" fill="#0000ff" textLength="9" lengthAdjust="spacingAndGlyphs" font-weight="bold" font-style="italic" font-family='"Liberation Serif", serif' xml:space="preserve">i</text>
<text x="391" y="61" font-size="11" fill="#0000ff" textLength="6" lengthAdjust="spacingAndGlyphs" font-weight="bold" xml:space="preserve">*</text>
<text x="405" y="67" font-size="19" fill="#0000ff" textLength="17" lengthAdjust="spacingAndGlyphs" font-weight="bold" font-style="italic" font-family='"Liberation Serif", serif' xml:space="preserve">T</text>
<path d="M433 53h10v13l-2 2h-6l-2-2z" fill="#000"/><path d="M431 54h14l-2 3h-10zM431 59h14l-2 3h-10zM431 63.500h14l-2 3h-10z" fill="#202020"/>
<circle cx="438" cy="55.500" r="1.800" fill="#ff0000"/><circle cx="438" cy="60" r="1.800" fill="#ffff00"/><circle cx="438" cy="64.500" r="1.800" fill="#00e000"/>
<path d="M463 58l2-5h8l-1 5" fill="#fff" stroke="#000"/><path d="M460.500 59.500l2-2h12l1.500 2v5l-2 2h-12l-1.500-1.500z" fill="#d8d8d8" stroke="#000"/><path d="M461 62.500h14M463 65.500h11" stroke="#000"/><path d="M465 55.500h6" stroke="#808080"/>
<rect x="484.500" y="53.500" width="10" height="12" fill="#fff" stroke="#000"/><rect x="485" y="54" width="9" height="2.500" fill="#000080"/>
<rect x="489.500" y="56.500" width="10" height="12" fill="#fff" stroke="#000"/><rect x="490" y="57" width="9" height="2.500" fill="#000080"/>
<text x="491.5" y="67" font-size="8.5" fill="#a00000" textLength="5" lengthAdjust="spacingAndGlyphs" font-weight="bold" xml:space="preserve">7</text>
<text x="485.7" y="63.5" font-size="7" fill="#a00000" textLength="3.5" lengthAdjust="spacingAndGlyphs" font-weight="bold" xml:space="preserve">6</text>
<text x="509.5" y="68" font-size="18" fill="#0000ff" textLength="13" lengthAdjust="spacingAndGlyphs" font-weight="bold" xml:space="preserve">$</text>
<path d="M539.500 53.500h12v13h-6v-8h-6z" fill="#ffff00" stroke="#000"/><path d="M541.500 54v2M543.500 54v3M545.500 54v2M547.500 54v3M549.500 54v2M551 59.500h-2M551 61.500h-3M551 63.500h-2" stroke="#000" stroke-width="0.900"/>
<rect x="546.5" y="60" width="2" height="5" fill="#fff" />
<path d="M564.500 52v15M562 65.500h2.500M564.500 54.500h2" stroke="#000080" stroke-width="1.2" fill="none"/>
<path d="M569.500 53v15" stroke="#ff0000" stroke-width="1.2"/><rect x="567.500" y="57.500" width="4" height="6" fill="#c0c0c0" stroke="#ff0000"/>
<path d="M574 52h4v9l-1 1.500h-2l-1-1.500z" fill="#000"/>
<rect x="610.500" y="55.500" width="9" height="13" fill="#f8f8f8" stroke="#0000ff" stroke-width="1.2"/><rect x="619.500" y="51.500" width="9" height="14" fill="#f8f8f8" stroke="#0000ff" stroke-width="1.2"/>
<path d="M612.500 58v7M612.500 61.500h-1M615.500 57v8M615.500 60h1.500M617.500 60v7M617.500 63h1.500M622.500 55v7M622.500 60h1.500M625.500 53v7M625.500 55.500h1M627 52.500v4" stroke="#000" stroke-width="1.1" fill="none"/>
<rect x="635.500" y="55.500" width="9" height="13" fill="none" stroke="#800080" stroke-width="1.2"/><rect x="644.500" y="51.500" width="9" height="14" fill="none" stroke="#800080" stroke-width="1.2"/>
<rect x="637" y="59" width="6" height="8" fill="none" stroke="#0000ff"/><rect x="646" y="53" width="6" height="11" fill="none" stroke="#0000ff"/>
<path d="M637.500 58v7M640.500 57v8M642.500 60v7M647.500 55v7M650.500 53v7M652 52.500v4" stroke="#000" stroke-width="1.300" fill="none"/>
<path d="M667 52h9" stroke="#ff0000" stroke-width="1.500" stroke-dasharray="2 1"/><path d="M663 56h15" stroke="#ff0000" stroke-width="2"/><path d="M667 60h9" stroke="#ff0000" stroke-width="1.500" stroke-dasharray="2 1"/>
<path d="M674 51v14" stroke="#ffff00" stroke-width="2"/><path d="M663 58v10" stroke="#ffff00" stroke-width="2"/>
<path d="M660 59.500h9" stroke="#008000" stroke-width="1.500" stroke-dasharray="2 1"/><path d="M660 63.500h10" stroke="#008000" stroke-width="2"/><path d="M660 67.500h10" stroke="#008000" stroke-width="1.200" stroke-dasharray="2 1"/>
<path d="M698 52h10" stroke="#ff0000" stroke-width="1.500" stroke-dasharray="2 1"/><path d="M694 56h14" stroke="#ff0000" stroke-width="2"/><path d="M698 60h10" stroke="#ff0000" stroke-width="1.500" stroke-dasharray="2 1"/>
<path d="M694 56v12M694 60h2" stroke="#ffff00" stroke-width="2" fill="none"/>
<text x="716.5" y="59" font-size="9" fill="#000080" textLength="18" lengthAdjust="spacingAndGlyphs" font-weight="bold" stroke="#000080" stroke-width="0.4" xml:space="preserve">Live</text>
<text x="716.5" y="68" font-size="9" fill="#000080" textLength="18" lengthAdjust="spacingAndGlyphs" font-weight="bold" stroke="#000080" stroke-width="0.4" xml:space="preserve">Rng</text>
<path d="M754 52h10" stroke="#000080" stroke-width="1.500" stroke-dasharray="2 1"/><path d="M750 56h14" stroke="#000080" stroke-width="2"/><path d="M754 60h10" stroke="#000080" stroke-width="1.500" stroke-dasharray="2 1"/>
<path d="M750 56v12M750 60h2" stroke="#ffff00" stroke-width="2" fill="none"/>
<text x="772.5" y="59" font-size="9" fill="#000080" textLength="18" lengthAdjust="spacingAndGlyphs" font-weight="bold" stroke="#000080" stroke-width="0.4" xml:space="preserve">Live</text>
<text x="772.5" y="68" font-size="9" fill="#000080" textLength="18" lengthAdjust="spacingAndGlyphs" font-weight="bold" stroke="#000080" stroke-width="0.4" xml:space="preserve">Rng</text>
<text x="804.5" y="60" font-size="9.5" fill="#ff0000" textLength="15" lengthAdjust="spacingAndGlyphs" xml:space="preserve">HP</text>
<text x="804.5" y="69" font-size="10.5" fill="#0000ff" textLength="15" lengthAdjust="spacingAndGlyphs" font-weight="bold" xml:space="preserve">FZ</text>
<text x="827" y="62" font-size="11" fill="#ff00ff" textLength="7" lengthAdjust="spacingAndGlyphs" font-weight="bold" xml:space="preserve">F</text>
<text x="840" y="58.5" font-size="9" fill="#ff00ff" textLength="5.5" lengthAdjust="spacingAndGlyphs" font-weight="bold" xml:space="preserve">z</text>
<text x="834.5" y="69" font-size="12" fill="#ff00ff" textLength="7" lengthAdjust="spacingAndGlyphs" font-weight="bold" xml:space="preserve">h</text>
<text x="859" y="66.5" font-size="14.5" fill="#000" textLength="17" lengthAdjust="spacingAndGlyphs" font-weight="bold" font-family='"Liberation Mono", monospace' xml:space="preserve">JZ</text>
<g fill="none" stroke-width="1.1"><path d="M14 85q3-4.500 6.500-3.500t4.500 7.500t4 7.500h3M14 91.500q3-4.500 6.500-3.500t4 4.500t4 2.500h3" stroke="#ff00ff"/><path d="M14 87l14-6M14 94l18-7" stroke="#0000ff"/></g>
<circle cx="48" cy="84" r="4.200" fill="#ffff00"/>
<path d="M52 88l9 9" stroke="#ff00ff" stroke-width="1.500" stroke-dasharray="1.500 2"/><circle cx="56" cy="92" r="2" fill="#0000ff"/><path d="M59.500 93.500l1.500 1.500l-1.500 1.500l-1.500-1.500z" fill="#ff0000"/>
<circle cx="72" cy="84" r="4.200" fill="#ffff00"/>
<text x="68" y="98" font-size="11" fill="#000" textLength="7" lengthAdjust="spacingAndGlyphs" xml:space="preserve">R</text>
<path d="M76 88l9 9" stroke="#ff00ff" stroke-width="1.500" stroke-dasharray="1.500 2"/><circle cx="80" cy="92" r="2" fill="#0000ff"/><path d="M83.500 93.500l1.500 1.500l-1.500 1.500l-1.500-1.500z" fill="#ff0000"/>
<circle cx="107" cy="89" r="7.500" fill="#fff" stroke="#000" stroke-width="1.200"/><circle cx="107" cy="89" r="5.500" fill="none" stroke="#0000ff"/><circle cx="107" cy="89" r="3.500" fill="none" stroke="#ff0000"/><circle cx="107" cy="89" r="1.500" fill="none" stroke="#ff00ff"/>
<circle cx="131" cy="89" r="8" fill="#fff" stroke="#000" stroke-width="1.200"/><circle cx="127.500" cy="85" r="2.600" fill="#0000ff"/><circle cx="131" cy="95" r="2.200" fill="#ff0000"/><path d="M131 87.500v3M129.500 89h3" stroke="#ff00ff"/>
<path d="M131 81v1.500M138 89h1.500M123 89h1.500M136.500 83.500l-1 1M136.500 94.500l-1-1" stroke="#000" stroke-width="0.800"/>
<g fill="none" stroke-width="1.100"><path d="M147 85c2-4 5-5 8-3s3 5 5 6" stroke="#ff00ff"/><path d="M147 88l15-6" stroke="#0000ff"/><path d="M147 92c5-2 10-2 16-2" stroke="#808080"/><path d="M148 96c2-3 4-4 6-1M156 96c2-2 4-4 7-4" stroke="#ff0000"/></g>
<path d="M170 92c2-6 5-11 9-10s1 14 5 15s4-3 5-4" fill="none" stroke="#ff00ff" stroke-width="1.100"/>
<text x="174" y="96" font-size="14" fill="#000" textLength="9.5" lengthAdjust="spacingAndGlyphs" font-weight="bold" xml:space="preserve">P</text>
<rect x="200" y="80" width="18" height="18" fill="#fdfdfd" />
<rect x="203.500" y="81.500" width="12" height="14" fill="#fff" stroke="#000"/><path d="M203 96.500h13.500M216.500 82v15" stroke="#000"/>
<g stroke="#00e0ff" stroke-width="1" stroke-dasharray="1 1"><path d="M206.500 83v12M208.500 83v12M210.500 83v12M212.500 83v12M214.500 83v12"/></g><path d="M205.500 83v12" stroke="#ff0000" stroke-dasharray="1 1"/>
<rect x="0" y="103" width="29" height="647" fill="#f0f0f0" />
<rect x="27" y="103" width="2" height="445" fill="#fbfbfb" />
<line x1="4" y1="170.5" x2="27" y2="170.5" stroke="#a0a0a0" stroke-width="1" />
<line x1="4" y1="171.5" x2="27" y2="171.5" stroke="#fff" stroke-width="1" />
<path d="M11 180v12l3-3l2.500 5l2-1l-2.500-5h4z" fill="#000"/>
<path d="M15 202v18M6 211h18" stroke="#000" stroke-width="2"/>
<rect x="3" y="224" width="23" height="22" fill="#f8f8f8" />
<path d="M3.500 246V224.500H26" fill="none" stroke="#a0a0a0"/><path d="M3.500 245.500H25.500V225" fill="none" stroke="#fff"/>
<path d="M21 231.800h-5.200a4.900 4.900 0 0 0 0 9.800h5.200v-3.200h-4.800a1.700 1.700 0 0 1 0-3.400h4.800z" fill="#ff0000" stroke="#000" stroke-width="0.900"/>
<rect x="19.2" y="232.3" width="1.6" height="2.2" fill="#fff" />
<rect x="19.2" y="238.9" width="1.6" height="2.2" fill="#fff" />
<line x1="4" y1="249.5" x2="25" y2="249.5" stroke="#a0a0a0" stroke-width="1" />
<line x1="4" y1="250.5" x2="25" y2="250.5" stroke="#fff" stroke-width="1" />
<line x1="4" y1="303.5" x2="25" y2="303.5" stroke="#a0a0a0" stroke-width="1" />
<line x1="4" y1="304.5" x2="25" y2="304.5" stroke="#fff" stroke-width="1" />
<line x1="4" y1="405.5" x2="25" y2="405.5" stroke="#a0a0a0" stroke-width="1" />
<line x1="4" y1="406.5" x2="25" y2="406.5" stroke="#fff" stroke-width="1" />
<line x1="4" y1="483.5" x2="25" y2="483.5" stroke="#a0a0a0" stroke-width="1" />
<line x1="4" y1="484.5" x2="25" y2="484.5" stroke="#fff" stroke-width="1" />
<rect x="7.500" y="262.5" width="8" height="9.500" fill="#f4f4f4" stroke="#000"/><rect x="8.500" y="266.5" width="4" height="4.500" fill="#c0c0c0"/>
<circle cx="13.500" cy="263.5" r="4.300" fill="#e8e8e8" fill-opacity="0.700" stroke="#000" stroke-width="1.300"/><path d="M16.800 266.8l5.400 4.600" stroke="#000" stroke-width="2.200"/>
<path d="M11 262.5h4.500M11.500 264.5h3.500" stroke="#00d0e0"/>
<rect x="7.500" y="286.5" width="8" height="9.500" fill="#f4f4f4" stroke="#a0a0a0"/><rect x="8.500" y="290.5" width="4" height="4.500" fill="#a8a8a8"/>
<circle cx="13.500" cy="287.5" r="4.300" fill="#e8e8e8" fill-opacity="0.700" stroke="#a0a0a0" stroke-width="1.300"/><path d="M16.800 290.8l5.400 4.600" stroke="#a0a0a0" stroke-width="2.200"/>
<path d="M11 286.5h4.500M11.500 288.5h3.500" stroke="#d0d0d0"/>
<path d="M8 312h15" stroke="#000" stroke-width="1.500"/>
<path d="M9 314L20 325" stroke="#000" stroke-width="4.500" stroke-linecap="round"/><path d="M9.7 314.7L20 325" stroke="#00e000" stroke-width="2.600" stroke-linecap="round"/><circle cx="9" cy="314" r="1" fill="#fff"/>
<path d="M8 336h15" stroke="#000" stroke-width="1.500"/>
<path d="M9 338L20 349" stroke="#000" stroke-width="4.500" stroke-linecap="round"/><path d="M9.7 338.7L20 349" stroke="#0000ff" stroke-width="2.600" stroke-linecap="round"/><circle cx="9" cy="338" r="1" fill="#fff"/>
<path d="M8 360v15" stroke="#000" stroke-width="1.500"/>
<path d="M10 362L21 372" stroke="#000" stroke-width="4.500" stroke-linecap="round"/><path d="M10.7 362.7L21 372" stroke="#0000ff" stroke-width="2.600" stroke-linecap="round"/><circle cx="10" cy="362" r="1" fill="#fff"/>
<path d="M6 395.500L19.500 382" stroke="#000" stroke-width="1.300"/><rect x="17.500" y="389.500" width="4" height="9" fill="#00ffff" stroke="#008080" stroke-width="0.600"/><path d="M18.500 389.500l1-4l1 4z" fill="#ffff00" stroke="#c0a000" stroke-width="0.500"/>
<text x="6.5" y="424.3" font-size="12" fill="#000" textLength="17.5" lengthAdjust="spacingAndGlyphs" xml:space="preserve">abc</text>
<text x="6.5" y="447.3" font-size="12" fill="#000" textLength="17.5" lengthAdjust="spacingAndGlyphs" xml:space="preserve">abc</text>
<path d="M8 437l15 15M23 437l-15 15" stroke="#ff0000" stroke-width="1.300"/>
<text x="11" y="474" font-size="14.5" fill="#0000ff" textLength="9" lengthAdjust="spacingAndGlyphs" font-weight="bold" xml:space="preserve">F</text>
<circle cx="15" cy="498.500" r="7.500" fill="none" stroke="#000" stroke-width="1.600"/>
<ellipse cx="15" cy="523.500" rx="8.500" ry="5.500" fill="none" stroke="#000" stroke-width="1.600"/>
<path d="M7 539v5l-3-2.500z" fill="#000"/>
<rect x="1251" y="103" width="29" height="647" fill="#f0f0f0" />
<rect x="1251" y="103" width="2" height="647" fill="#f8f8f8" />
<line x1="1279.5" y1="104" x2="1279.5" y2="559" stroke="#c8c8c8" stroke-width="1" />
<line x1="1253" y1="559.5" x2="1280" y2="559.5" stroke="#d8d8d8" stroke-width="1" />
<line x1="1255" y1="108.5" x2="1278" y2="108.5" stroke="#a0a0a0" stroke-width="1" />
<line x1="1255" y1="109.5" x2="1278" y2="109.5" stroke="#fff" stroke-width="1" />
<text x="1257" y="132" font-size="15.5" fill="#000" textLength="11.5" lengthAdjust="spacingAndGlyphs" font-weight="bold" xml:space="preserve">A</text>
<path d="M1262 119.500L1275 127" stroke="#ff0000" stroke-width="1.600"/>
<path d="M1257.500 142L1265 158" stroke="#00e000" stroke-width="1.500"/><path d="M1257.500 142L1275 158" stroke="#000" stroke-width="1.500"/><path d="M1257.500 142L1275 148" stroke="#ff0000" stroke-width="1.600"/>
<g fill="none" stroke-width="1.200"><path d="M1257.500 170a8.500 8.500 0 0 0 17 0" stroke="#000" transform="translate(0 1.500)"/><path d="M1259 169a7 7 0 0 0 14 0" stroke="#ff00ff" stroke-width="1.500"/><path d="M1262 169a4 4 0 0 0 8 0" stroke="#00e000" stroke-width="1.300"/><path d="M1257 179.500L1266 170.500" stroke="#000"/></g>
<text x="1258.5" y="203" font-size="14" fill="#000080" textLength="16" lengthAdjust="spacingAndGlyphs" font-weight="bold" xml:space="preserve">DL</text>
<g fill="none" stroke="#000" stroke-width="1.400"><path d="M1257.500 222L1265 214M1258.500 230L1274 214.500M1269.500 231L1274 226.500"/><path d="M1257.500 222L1266 230" stroke="#606060"/></g>
<text x="1256.5" y="250" font-size="14" fill="#000" textLength="5" lengthAdjust="spacingAndGlyphs" font-weight="bold" font-family='"Liberation Serif", serif' xml:space="preserve">I</text>
<path d="M1262 244L1273 254" stroke="#000" stroke-width="1.500"/><path d="M1265 245.500h10" stroke="#ff0000" stroke-width="1.300"/><path d="M1268 249h7" stroke="#0000ff" stroke-width="1.300"/><path d="M1271 252.500h4" stroke="#008000" stroke-width="1.300"/>
<path d="M1258 263.500h16.500M1258 269.500h16.500M1258 276.500h16.500" stroke="#000" stroke-width="1.100"/>
<path d="M1258.500 287v14M1263.500 287v14M1268 287v14M1272.500 287v14" stroke="#0000ff" stroke-width="1.400"/>
<path d="M1258.500 311v14M1263.500 311v14M1268.500 311v14M1273 311v14" stroke="#ff0000" stroke-width="1.400"/>
<path d="M1258 344v5.500M1258 347h1.500M1260.500 342v5M1260.500 344.500h1.500M1263 339.500v5M1263 342h1.500M1265.500 337v5M1265.500 339.500h1.500" stroke="#0000ff" stroke-width="1.300" fill="none"/>
<rect x="1268.500" y="333.500" width="6" height="3" fill="#fff" stroke="#ff0000" stroke-width="1.200"/><rect x="1271.500" y="339.500" width="3" height="3" fill="#fff" stroke="#ff0000" stroke-width="1.200"/>
<path d="M1260 368.500L1267.500 357.500M1260.500 373L1274 359M1269 371.500L1274 366" stroke="#000" stroke-width="1.100"/>
<path d="M1259.500 395L1267 384" stroke="#0000ff" stroke-width="1.300"/><path d="M1267.500 385v10M1259 395.500h8" stroke="#d00000" stroke-dasharray="1 1"/><path d="M1268.500 395L1273.500 385" stroke="#000" stroke-width="1.200"/>
<path d="M1257 407.500h18M1257 414.500h18" stroke="#0000ff" stroke-width="1.200"/><path d="M1257 410.500h18M1257 419.500h18" stroke="#ff0000" stroke-width="1.200"/>
<text x="1259.5" y="420.5" font-size="14.5" fill="#008000" textLength="11.5" lengthAdjust="spacingAndGlyphs" font-weight="bold" xml:space="preserve">G</text>
<path d="M1259.500 444.500L1264 431M1259.500 444.500L1268 431M1259.500 444.500L1272 432M1259.500 444.500L1274.500 437M1259.500 444.500L1273.500 441.500" stroke="#000" stroke-width="1.100"/><circle cx="1260.500" cy="443.500" r="1.600" fill="#000"/>
<text x="1257.5" y="466.5" font-size="14" fill="#800080" textLength="8" lengthAdjust="spacingAndGlyphs" font-family='"Liberation Mono", monospace' xml:space="preserve">G</text>
<text x="1266.5" y="466.5" font-size="14" fill="#008000" textLength="7.5" lengthAdjust="spacingAndGlyphs" font-family='"Liberation Mono", monospace' xml:space="preserve">9</text>
<text x="1257.5" y="490.5" font-size="14" fill="#800080" textLength="16" lengthAdjust="spacingAndGlyphs" font-family='"Liberation Mono", monospace' xml:space="preserve">GS</text>
<text x="1258" y="515" font-size="14" fill="#000" textLength="16" lengthAdjust="spacingAndGlyphs" font-weight="bold" xml:space="preserve">LS</text>
<text x="1260" y="539" font-size="14" fill="#000" textLength="13" lengthAdjust="spacingAndGlyphs" font-weight="bold" xml:space="preserve">Bi</text>
<path d="M1258.500 550v5l-3-2.500z" fill="#000"/>
<defs><linearGradient id="dgt" x1="0" y1="0" x2="1" y2="0"><stop offset="0" stop-color="#8b98a8"/><stop offset="0.3" stop-color="#7c8a9b"/><stop offset="1" stop-color="#6b7b8e"/></linearGradient><linearGradient id="dgs" x1="0" y1="0" x2="0" y2="1"><stop offset="0" stop-color="#76869a"/><stop offset="0.226" stop-color="#8493a4"/><stop offset="0.30" stop-color="#d4d9de"/><stop offset="0.301" stop-color="#5b6b7d"/><stop offset="0.5" stop-color="#3d5068"/><stop offset="1" stop-color="#22344b"/></linearGradient><linearGradient id="dgo" x1="0" y1="0" x2="0" y2="1"><stop offset="0" stop-color="#e8ecf0"/><stop offset="0.30" stop-color="#f4f6f8"/><stop offset="0.301" stop-color="#8fa6b8"/><stop offset="0.6" stop-color="#2ab0e6"/><stop offset="1" stop-color="#2ab0e6"/></linearGradient><radialGradient id="dgl" cx="0.5" cy="0.5" r="0.5"><stop offset="0" stop-color="#fff" stop-opacity="0.55"/><stop offset="1" stop-color="#fff" stop-opacity="0"/></radialGradient></defs>
<rect x="1021.5" y="279.5" width="187" height="312" rx="6" fill="url(#dgs)" stroke="url(#dgo)"/>
<path d="M1022 303V286Q1022 280 1028 280H1202Q1208 280 1208 286V303Z" fill="url(#dgt)"/>
<ellipse cx="1062" cy="291" rx="48" ry="11" fill="url(#dgl)"/>
<text x="1028.5" y="294.5" font-size="12.5" fill="#15182a" textLength="72" lengthAdjust="spacingAndGlyphs" xml:space="preserve">FW20 Weekly</text>
<rect x="1027" y="302" width="176" height="285" fill="#b8c4d0" />
<rect x="1028" y="303" width="174" height="283" fill="#17263a" />
<rect x="1029" y="304" width="172" height="281" fill="#f0f0f0" />
<text x="1060" y="321.5" font-size="12" fill="#000" textLength="18" lengthAdjust="spacingAndGlyphs" xml:space="preserve">683</text>
<rect x="1120" y="308" width="16" height="16" fill="#f0f0f0" />
<path d="M1120.5 323.5V308.5H1135.5" fill="none" stroke="#fff"/>
<path d="M1121 322.5H1134.5V309" fill="none" stroke="#a0a0a0"/>
<path d="M1120 323.5H1135.5V308" fill="none" stroke="#696969"/>
<rect x="1137" y="308" width="16" height="16" fill="#f0f0f0" />
<path d="M1137.5 323.5V308.5H1152.5" fill="none" stroke="#fff"/>
<path d="M1138 322.5H1151.5V309" fill="none" stroke="#a0a0a0"/>
<path d="M1137 323.5H1152.5V308" fill="none" stroke="#696969"/>
<path d="M1130 311.500v8l-4-4z" fill="#000"/><path d="M1143 311.500v8l4-4z" fill="#000"/>
<rect x="1120" y="328" width="77" height="20" fill="#f0f0f0" />
<path d="M1120.500 348V328.5H1197" fill="none" stroke="#808080"/>
<path d="M1121.500 347V329.5H1196" fill="none" stroke="#808080"/>
<path d="M1121 347.5H1196.500V329" fill="none" stroke="#fff"/>
<text x="1122.5" y="340.5" font-size="12" fill="#000" textLength="54" lengthAdjust="spacingAndGlyphs" xml:space="preserve">2011-02-14</text>
<rect x="1120" y="376" width="77" height="20" fill="#f0f0f0" />
<path d="M1120.500 396V376.5H1197" fill="none" stroke="#808080"/>
<path d="M1121.500 395V377.5H1196" fill="none" stroke="#808080"/>
<path d="M1121 395.5H1196.500V377" fill="none" stroke="#fff"/>
<text x="1122.5" y="388.5" font-size="12" fill="#000" textLength="24" lengthAdjust="spacingAndGlyphs" xml:space="preserve">2748</text>
<rect x="1120" y="400" width="77" height="20" fill="#f0f0f0" />
<path d="M1120.500 420V400.5H1197" fill="none" stroke="#808080"/>
<path d="M1121.500 419V401.5H1196" fill="none" stroke="#808080"/>
<path d="M1121 419.5H1196.500V401" fill="none" stroke="#fff"/>
<text x="1122.5" y="412.5" font-size="12" fill="#000" textLength="24" lengthAdjust="spacingAndGlyphs" xml:space="preserve">2754</text>
<rect x="1120" y="424" width="77" height="20" fill="#f0f0f0" />
<path d="M1120.500 444V424.5H1197" fill="none" stroke="#808080"/>
<path d="M1121.500 443V425.5H1196" fill="none" stroke="#808080"/>
<path d="M1121 443.5H1196.500V425" fill="none" stroke="#fff"/>
<text x="1122.5" y="436.5" font-size="12" fill="#000" textLength="24" lengthAdjust="spacingAndGlyphs" xml:space="preserve">2629</text>
<rect x="1120" y="448" width="77" height="20" fill="#f0f0f0" />
<path d="M1120.500 468V448.5H1197" fill="none" stroke="#808080"/>
<path d="M1121.500 467V449.5H1196" fill="none" stroke="#808080"/>
<path d="M1121 467.5H1196.500V449" fill="none" stroke="#fff"/>
<text x="1122.5" y="460.5" font-size="12" fill="#000" textLength="24" lengthAdjust="spacingAndGlyphs" xml:space="preserve">2668</text>
<rect x="1120" y="472" width="77" height="20" fill="#f0f0f0" />
<path d="M1120.500 492V472.5H1197" fill="none" stroke="#808080"/>
<path d="M1121.500 491V473.5H1196" fill="none" stroke="#808080"/>
<path d="M1121 491.5H1196.500V473" fill="none" stroke="#fff"/>
<text x="1122.5" y="484.5" font-size="12" fill="#000" textLength="36" lengthAdjust="spacingAndGlyphs" xml:space="preserve">240756</text>
<text x="1090.5" y="342.5" font-size="11.5" fill="#000" textLength="23" lengthAdjust="spacingAndGlyphs" xml:space="preserve">Date</text>
<text x="1087.5" y="390.5" font-size="11.5" fill="#000" textLength="26" lengthAdjust="spacingAndGlyphs" xml:space="preserve">Open</text>
<text x="1103.5" y="414.5" font-size="11.5" fill="#000" textLength="10" lengthAdjust="spacingAndGlyphs" xml:space="preserve">Hi</text>
<text x="1093.5" y="438.5" font-size="11.5" fill="#000" textLength="20" lengthAdjust="spacingAndGlyphs" xml:space="preserve">Low</text>
<text x="1085.5" y="462.5" font-size="11.5" fill="#000" textLength="28" lengthAdjust="spacingAndGlyphs" xml:space="preserve">Close</text>
<text x="1078.5" y="486.5" font-size="11.5" fill="#000" textLength="35" lengthAdjust="spacingAndGlyphs" xml:space="preserve">Volume</text>
<rect x="1040" y="532" width="53" height="21" fill="#f0f0f0" />
<path d="M1040.5 552.5V532.5H1092.5" fill="none" stroke="#fff"/>
<path d="M1041 551.5H1091.5V533" fill="none" stroke="#a0a0a0"/>
<path d="M1040 552.5H1092.5V532" fill="none" stroke="#696969"/>
<rect x="1144" y="532" width="53" height="21" fill="#f0f0f0" />
<path d="M1144.5 552.5V532.5H1196.5" fill="none" stroke="#fff"/>
<path d="M1145 551.5H1195.5V533" fill="none" stroke="#a0a0a0"/>
<path d="M1144 552.5H1196.5V532" fill="none" stroke="#696969"/>
<rect x="1040" y="560" width="53" height="21" fill="#f0f0f0" />
<path d="M1040.5 580.5V560.5H1092.5" fill="none" stroke="#fff"/>
<path d="M1041 579.5H1091.5V561" fill="none" stroke="#a0a0a0"/>
<path d="M1040 580.5H1092.5V560" fill="none" stroke="#696969"/>
<text x="1058" y="545.5" font-size="11.5" fill="#000" textLength="17" lengthAdjust="spacingAndGlyphs" xml:space="preserve">Exit</text>
<text x="1161" y="545.5" font-size="11.5" fill="#000" textLength="18" lengthAdjust="spacingAndGlyphs" xml:space="preserve">Edit</text>
<text x="1050" y="573.5" font-size="11.5" fill="#000" textLength="33" lengthAdjust="spacingAndGlyphs" xml:space="preserve">Cancel</text>
<rect x="0" y="747" width="1280" height="23" fill="#f0f0f0" />
<rect x="29" y="747" width="1" height="21" fill="#8c8c8c" />
<rect x="30" y="747" width="4" height="21" fill="#fff" />
<rect x="30" y="747" width="1221" height="2" fill="#fff" />
<rect x="0" y="768" width="1280" height="1" fill="#fafafa" />
<path d="M35.5 766V750.5H190" fill="none" stroke="#6e6e6e"/>
<path d="M36.5 765V751.5H189" fill="none" stroke="#a8a8a8"/>
<path d="M36 765.5H189.5V751" fill="none" stroke="#fff"/>
<path d="M1019.5 766V750.5H1251" fill="none" stroke="#6e6e6e"/>
<path d="M1020.5 765V751.5H1250" fill="none" stroke="#a8a8a8"/>
<path d="M1020 765.5H1250.5V751" fill="none" stroke="#fff"/>
<defs><linearGradient id="tkg" x1="0" y1="0" x2="0" y2="1"><stop offset="0" stop-color="#4a4e54"/><stop offset="0.035" stop-color="#4a4e54"/><stop offset="0.04" stop-color="#8c9094"/><stop offset="0.50" stop-color="#363a40"/><stop offset="0.505" stop-color="#04070c"/><stop offset="1" stop-color="#0e1218"/></linearGradient><linearGradient id="tbt" x1="0" y1="0" x2="0" y2="1"><stop offset="0" stop-color="#70747c"/><stop offset="0.46" stop-color="#3a3f47"/><stop offset="0.47" stop-color="#161a20"/><stop offset="1" stop-color="#10141a"/></linearGradient><radialGradient id="orb" cx="0.5" cy="0.95" r="0.95"><stop offset="0" stop-color="#28c8f8"/><stop offset="0.3" stop-color="#0c5c94"/><stop offset="0.65" stop-color="#1c5a8c"/><stop offset="1" stop-color="#5c8cb0"/></radialGradient></defs>
<rect x="0" y="769" width="1280" height="31" fill="url(#tkg)" />
<circle cx="30.300" cy="786.800" r="20.800" fill="#0a1420"/><circle cx="30.300" cy="786.800" r="19.500" fill="url(#orb)" stroke="#9cc8e8" stroke-width="0.800" stroke-opacity="0.600"/><ellipse cx="30.300" cy="776" rx="15" ry="8.500" fill="#c8e0f0" fill-opacity="0.280"/>
<path d="M21.500 773.500q5-2 10 0.500l-2 9.500q-5-2.500-10-0.500z" fill="#e8582c"/><path d="M32.500 775q5 2.500 10 0l-2.500 10q-5 2.500-10 0z" fill="#8cc43c"/><path d="M19 784.500q5-2 10 0.500l-2.200 9.500q-5-2.500-10-0.500z" fill="#3c9ce0"/><path d="M29.800 786q5 2.500 10 0l-2.500 9.500q-5 2.500-10 0z" fill="#f4c030"/>
<rect x="65" y="776" width="1.5" height="1.5" fill="#2c3036" />
<rect x="68" y="776" width="1.5" height="1.5" fill="#2c3036" />
<rect x="71" y="776" width="1.5" height="1.5" fill="#2c3036" />
<rect x="65" y="780" width="1.5" height="1.5" fill="#2c3036" />
<rect x="68" y="780" width="1.5" height="1.5" fill="#2c3036" />
<rect x="71" y="780" width="1.5" height="1.5" fill="#2c3036" />
<rect x="65" y="784" width="1.5" height="1.5" fill="#2c3036" />
<rect x="68" y="784" width="1.5" height="1.5" fill="#2c3036" />
<rect x="71" y="784" width="1.5" height="1.5" fill="#2c3036" />
<rect x="65" y="788" width="1.5" height="1.5" fill="#50545a" />
<rect x="68" y="788" width="1.5" height="1.5" fill="#50545a" />
<rect x="71" y="788" width="1.5" height="1.5" fill="#50545a" />
<rect x="65" y="792" width="1.5" height="1.5" fill="#50545a" />
<rect x="68" y="792" width="1.5" height="1.5" fill="#50545a" />
<rect x="71" y="792" width="1.5" height="1.5" fill="#50545a" />
<rect x="65" y="796" width="1.5" height="1.5" fill="#50545a" />
<rect x="68" y="796" width="1.5" height="1.5" fill="#50545a" />
<rect x="71" y="796" width="1.5" height="1.5" fill="#50545a" />
<rect x="415" y="776" width="1.5" height="1.5" fill="#2c3036" />
<rect x="418" y="776" width="1.5" height="1.5" fill="#2c3036" />
<rect x="421" y="776" width="1.5" height="1.5" fill="#2c3036" />
<rect x="415" y="780" width="1.5" height="1.5" fill="#2c3036" />
<rect x="418" y="780" width="1.5" height="1.5" fill="#2c3036" />
<rect x="421" y="780" width="1.5" height="1.5" fill="#2c3036" />
<rect x="415" y="784" width="1.5" height="1.5" fill="#2c3036" />
<rect x="418" y="784" width="1.5" height="1.5" fill="#2c3036" />
<rect x="421" y="784" width="1.5" height="1.5" fill="#2c3036" />
<rect x="415" y="788" width="1.5" height="1.5" fill="#50545a" />
<rect x="418" y="788" width="1.5" height="1.5" fill="#50545a" />
<rect x="421" y="788" width="1.5" height="1.5" fill="#50545a" />
<rect x="415" y="792" width="1.5" height="1.5" fill="#50545a" />
<rect x="418" y="792" width="1.5" height="1.5" fill="#50545a" />
<rect x="421" y="792" width="1.5" height="1.5" fill="#50545a" />
<rect x="415" y="796" width="1.5" height="1.5" fill="#50545a" />
<rect x="418" y="796" width="1.5" height="1.5" fill="#50545a" />
<rect x="421" y="796" width="1.5" height="1.5" fill="#50545a" />
<rect x="1073" y="776" width="1.5" height="1.5" fill="#2c3036" />
<rect x="1076" y="776" width="1.5" height="1.5" fill="#2c3036" />
<rect x="1079" y="776" width="1.5" height="1.5" fill="#2c3036" />
<rect x="1073" y="780" width="1.5" height="1.5" fill="#2c3036" />
<rect x="1076" y="780" width="1.5" height="1.5" fill="#2c3036" />
<rect x="1079" y="780" width="1.5" height="1.5" fill="#2c3036" />
<rect x="1073" y="784" width="1.5" height="1.5" fill="#2c3036" />
<rect x="1076" y="784" width="1.5" height="1.5" fill="#2c3036" />
<rect x="1079" y="784" width="1.5" height="1.5" fill="#2c3036" />
<rect x="1073" y="788" width="1.5" height="1.5" fill="#50545a" />
<rect x="1076" y="788" width="1.5" height="1.5" fill="#50545a" />
<rect x="1079" y="788" width="1.5" height="1.5" fill="#50545a" />
<rect x="1073" y="792" width="1.5" height="1.5" fill="#50545a" />
<rect x="1076" y="792" width="1.5" height="1.5" fill="#50545a" />
<rect x="1079" y="792" width="1.5" height="1.5" fill="#50545a" />
<rect x="1073" y="796" width="1.5" height="1.5" fill="#50545a" />
<rect x="1076" y="796" width="1.5" height="1.5" fill="#50545a" />
<rect x="1079" y="796" width="1.5" height="1.5" fill="#50545a" />
<rect x="81.500" y="779.500" width="15" height="12" fill="#2c64c8" stroke="#b8c4d8"/><rect x="83" y="781" width="12" height="6" fill="#5a9cf0"/><rect x="83" y="789" width="12" height="1.500" fill="#101828"/>
<rect x="104.500" y="779.500" width="15" height="12" fill="#1c3c9c" stroke="#b8c4d8"/><rect x="106" y="781" width="6" height="4" fill="#e8ecf4"/><rect x="108" y="784" width="6" height="4" fill="#c8d0e0"/><rect x="111" y="787" width="6" height="4" fill="#e8ecf4"/>
<rect x="129" y="778" width="12" height="4" fill="#f0a030"/><rect x="128.500" y="781.500" width="14" height="9" fill="#e8eef8" stroke="#7ca8d8"/><rect x="132" y="787" width="7" height="6" fill="#38a080"/><rect x="138" y="782" width="3" height="2.500" fill="#e85030"/>
<path d="M152 780h13l-1 14h-11z" fill="#a8d8e0" stroke="#e8e4d0" stroke-width="0.800"/><path d="M153 778.500h12" stroke="#d0d4d8" stroke-width="1.500" stroke-dasharray="1 1"/><path d="M154 783h9M154 785.500h9M154 788h9M154 790.500h9" stroke="#78b0c0" stroke-width="0.700"/>
<path d="M173 783l6 1l1-5l2 1v4l8-2l-4 5l-5 2l-2 5l-2-1l1-5z" fill="#0010ff"/>
<rect x="200" y="776" width="9" height="13" rx="3" fill="#e8e040"/><rect x="202" y="778" width="5" height="8" fill="#181818"/><path d="M199 791h10M206 788l4 4" stroke="#c8c8d8" stroke-width="1.500"/>
<path d="M220 778h15l-2 16h-11z" fill="#a4b8cc" fill-opacity="0.850" stroke="#d8e0e8" stroke-width="0.700"/><circle cx="227.500" cy="786" r="3.500" fill="none" stroke="#4878d0" stroke-width="1.300"/>
<rect x="242.500" y="777.500" width="15" height="15" fill="#58a8a0" stroke="#2c8cf0" stroke-width="1.400"/><circle cx="250" cy="785" r="5.500" fill="#f08820"/><path d="M248 781.500v7l5.500-3.500z" fill="#fff"/>
<path d="M280 784a6.500 6.500 0 1 0-1.500 5.500h-3.500a3.500 3.500 0 1 1 1-4h-7v2.500h11z" fill="#2c8ce8"/><path d="M266 792c-2-3 3-11 15-14c-8 4-13 10-12 13" fill="none" stroke="#f0c020" stroke-width="1.500"/>
<path d="M289 777h9l3 2v14h-12z" fill="#f0d878" stroke="#c8a840" stroke-width="0.700"/><path d="M295 779v13" stroke="#d8b850"/>
<circle cx="319" cy="785" r="8" fill="#e8c020"/><path d="M319 785l-6.900-4a8 8 0 0 1 13.800 0z" fill="#d83020"/><path d="M319 785l-6.900-4a8 8 0 0 0 6.900 12z" fill="#48a848"/><circle cx="319" cy="785" r="3.600" fill="#f0f0f0"/><circle cx="319" cy="785" r="2.800" fill="#4888e0"/>
<circle cx="342" cy="785.500" r="8" fill="#e87010"/><circle cx="343" cy="784" r="4.800" fill="#3858c0"/><path d="M334.500 783q3-1 5 1.500q1 3 4 3.500q-4 3-8-1z" fill="#f0a020"/>
<path d="M365 777l8 5l-5 11l-10-4z" fill="#282828"/><circle cx="362" cy="786" r="2" fill="#e02020"/><circle cx="366" cy="782" r="2" fill="#20c020"/><circle cx="369" cy="786" r="2" fill="#e0e020"/><circle cx="365" cy="789" r="2" fill="#2040e0"/><circle cx="366" cy="785.500" r="1.500" fill="#e020e0"/>
<text x="380" y="786" font-size="10.5" fill="#e00000" textLength="17" lengthAdjust="spacingAndGlyphs" font-weight="bold" font-family='"Liberation Serif", serif' xml:space="preserve">NS</text>
<path d="M383 786l10 6M386 791l9-7" stroke="#101010" stroke-width="2"/><path d="M384 789h2M391 787h2" stroke="#30c0c0"/>
<rect x="429.5" y="772.500" width="157" height="25" rx="3" fill="url(#tbt)" stroke="#0a0c10"/>
<rect x="430.5" y="773.500" width="155" height="23" rx="2.500" fill="none" stroke="#80848c" stroke-opacity="0.800"/>
<rect x="590.5" y="772.500" width="155" height="25" rx="3" fill="url(#tbt)" stroke="#0a0c10"/>
<rect x="591.5" y="773.500" width="153" height="23" rx="2.500" fill="none" stroke="#80848c" stroke-opacity="0.800"/>
<rect x="750.5" y="772.500" width="156" height="25" rx="3" fill="#0b0f15" stroke="#0a0c10"/>
<rect x="751.5" y="773.500" width="154" height="23" rx="2.500" fill="none" stroke="#3c4048" stroke-opacity="0.800"/>
<path d="M441 778h13l-1 15h-11z" fill="#a8d8e0" stroke="#e8e4d0" stroke-width="0.800"/><path d="M442 777.500h12" stroke="#d0d4d8" stroke-width="1.500" stroke-dasharray="1 1"/><path d="M443 781h9M443 783.500h9M443 786h9M443 788.500h9" stroke="#78b0c0" stroke-width="0.700"/>
<text x="458.5" y="789" font-size="12.5" fill="#fff" textLength="115.5" lengthAdjust="spacingAndGlyphs" xml:space="preserve">systemy.txt - Notatnik</text>
<rect x="598" y="777" width="16" height="16" fill="#000" />
<ellipse cx="606" cy="785.500" rx="5.500" ry="4.500" fill="#a8c8e8"/><path d="M598 790l5-5l3 2l7-7" fill="none" stroke="#1010e0" stroke-width="1.200"/>
<text x="621" y="789" font-size="12.5" fill="#fff" textLength="67" lengthAdjust="spacingAndGlyphs" xml:space="preserve">Notowania 3</text>
<rect x="758" y="778" width="8" height="6" fill="#2030ff" />
<text x="758.5" y="783.5" font-size="7" fill="#fff" textLength="7" lengthAdjust="spacingAndGlyphs" font-weight="bold" xml:space="preserve">Zf</text>
<rect x="769" y="778" width="2" height="2" fill="#00e0e0" />
<rect x="759" y="790" width="2" height="2" fill="#ff00ff" />
<rect x="765" y="792" width="1.5" height="2" fill="#00c000" />
<rect x="770" y="785" width="1.5" height="2" fill="#fff" />
<text x="779" y="789" font-size="12.5" fill="#fff" textLength="110.5" lengthAdjust="spacingAndGlyphs" xml:space="preserve">Fibonacci/Galactic ...</text>
<text x="1091.5" y="787" font-size="12.5" fill="#f0f0f0" textLength="12.5" lengthAdjust="spacingAndGlyphs" xml:space="preserve">PL</text>
<text x="1112.5" y="788.5" font-size="12" fill="#e0e0e0" textLength="3" lengthAdjust="spacingAndGlyphs" xml:space="preserve">¡</text>
<path d="M1127.500 782l-5.500 3.500l5.500 3.500" fill="none" stroke="#f0f0f0" stroke-width="1.800"/>
<rect x="1135" y="775" width="16" height="16" fill="#000" />
<ellipse cx="1143.500" cy="783" rx="5.500" ry="4.500" fill="#a8c8e8"/><path d="M1135 788l5-5l3 2l7-7" fill="none" stroke="#1010e0" stroke-width="1.200"/>
<rect x="1153.500" y="776.500" width="15" height="14" fill="#c0c0c0" stroke="#1c2c9c" stroke-width="1.300"/><path d="M1154 786.500h14M1161 786.500v4" stroke="#1c2c9c" stroke-width="1.300"/>
<rect x="1189.500" y="777.500" width="7" height="12" rx="1" fill="#a8e0a0" stroke="#f0f0f0"/><rect x="1191" y="776" width="4" height="1.500" fill="#f0f0f0"/><path d="M1182 780h6v4l-2 2v4h-2v-4l-2-2z" fill="#f4f4f4"/><path d="M1183.500 777v3M1186.500 777v3" stroke="#e8c040" stroke-width="1.200"/>
<rect x="1204.500" y="776.500" width="9" height="8" fill="#3878d0" stroke="#e8ecf0"/><rect x="1200.500" y="780.500" width="9" height="8" fill="#3878d0" stroke="#e8ecf0"/><circle cx="1210" cy="787.500" r="4" fill="#30a040"/><path d="M1208 786a3 3 0 0 1 4 0" stroke="#3060e0" stroke-width="1.500" fill="none"/>
<path d="M1217 781h3l4-4v13l-4-4h-3z" fill="#e8ecf0"/><path d="M1226 781q1.500 2.500 0 5M1228.500 779.500q2.500 4 0 8" fill="none" stroke="#40c040" stroke-width="1.200"/>
<text x="1239.5" y="788.5" font-size="13" fill="#f4f4f4" textLength="26" lengthAdjust="spacingAndGlyphs" xml:space="preserve">23:41</text>
</svg></body></html>
